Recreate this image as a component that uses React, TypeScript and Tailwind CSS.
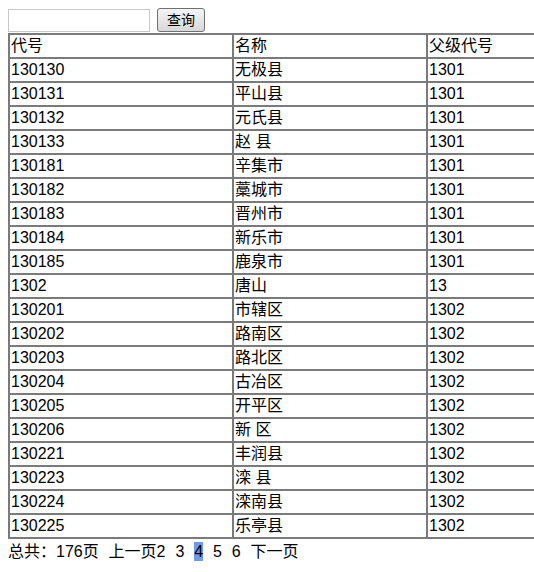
import React from 'react';

const rows: [string, string, string][] = [
  ['130130', '无极县', '1301'],
  ['130131', '平山县', '1301'],
  ['130132', '元氏县', '1301'],
  ['130133', '赵 县', '1301'],
  ['130181', '辛集市', '1301'],
  ['130182', '藁城市', '1301'],
  ['130183', '晋州市', '1301'],
  ['130184', '新乐市', '1301'],
  ['130185', '鹿泉市', '1301'],
  ['1302', '唐山', '13'],
  ['130201', '市辖区', '1302'],
  ['130202', '路南区', '1302'],
  ['130203', '路北区', '1302'],
  ['130204', '古冶区', '1302'],
  ['130205', '开平区', '1302'],
  ['130206', '新 区', '1302'],
  ['130221', '丰润县', '1302'],
  ['130223', '滦 县', '1302'],
  ['130224', '滦南县', '1302'],
  ['130225', '乐亭县', '1302'],
];

const cell = 'border-2 border-[#7a7a7a] h-6 px-px py-0 text-left align-middle font-normal leading-5';

export default function App() {
  return (
    <div
      className="w-[534px] h-[572px] overflow-hidden bg-white text-black text-base"
      style={{ fontFamily: '"Liberation Sans", "Noto Sans CJK SC", sans-serif' }}
    >
      <div className="pt-2 pl-2">
        <div className="flex items-center gap-[7px] h-6">
          <input className="w-[142px] h-[23px] border border-[#c8c8c8] bg-white outline-none" />
          <button className="w-12 h-6 rounded-[3px] border border-[#707070] bg-gradient-to-b from-[#f4f4f4] to-[#d8d8d8] text-sm leading-none text-black">
            查询
          </button>
        </div>
        <table className="w-[640px] border-collapse mt-px table-fixed">
          <colgroup>
            <col className="w-[224px]" />
            <col className="w-[194px]" />
            <col />
          </colgroup>
          <thead>
            <tr>
              <th className={cell}>代号</th>
              <th className={cell}>名称</th>
              <th className={cell}>父级代号</th>
            </tr>
          </thead>
          <tbody>
            {rows.map(([code, name, parent]) => (
              <tr key={code}>
                <td className={cell}>{code}</td>
                <td className={cell}>{name}</td>
                <td className={cell}>{parent}</td>
              </tr>
            ))}
          </tbody>
        </table>
        <div className="mt-px leading-6 whitespace-pre [word-spacing:0.5px]">
          总共：176页  上一页2  3  <span className="bg-[#6b9bea] py-px">4</span>  5  6  下一页
        </div>
      </div>
    </div>
  );
}
